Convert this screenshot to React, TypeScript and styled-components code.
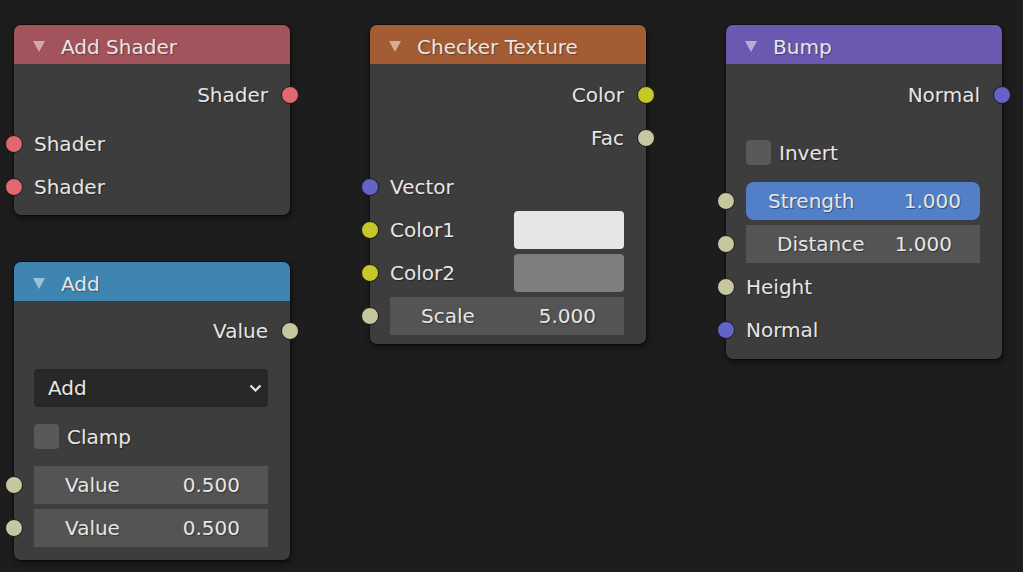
import React from "react";
import styled, { createGlobalStyle } from "styled-components";

const GlobalStyle = createGlobalStyle`
  html, body { margin: 0; padding: 0; background: #1d1d1d; }
  body { font-family: "DejaVu Sans", "Liberation Sans", sans-serif; }
`;

const SOCKET = {
  shader: "#e2676e",
  value: "#c6c79f",
  color: "#c7c72a",
  vector: "#6463c8",
};

type SocketKind = keyof typeof SOCKET;

const Canvas = styled.div`
  position: relative;
  width: 1023px;
  height: 572px;
  overflow: hidden;
  background: #1d1d1d;
  color: #e6e6e6;
  font-family: "DejaVu Sans", "Liberation Sans", sans-serif;
  font-size: 20px;
`;

const NodeBox = styled.div<{ $x: number; $y: number; $w: number }>`
  position: absolute;
  left: ${(p) => p.$x}px;
  top: ${(p) => p.$y}px;
  width: ${(p) => p.$w}px;
  background: #3d3d3d;
  border-radius: 7px;
  box-shadow: 0 0 0 1px rgba(0, 0, 0, 0.35), 1px 3px 7px rgba(0, 0, 0, 0.55);
  display: flex;
  flex-direction: column;
`;

const Header = styled.div<{ $color: string }>`
  height: 39px;
  box-sizing: border-box;
  padding: 4px 0 0 19px;
  background: ${(p) => p.$color};
  border-radius: 7px 7px 0 0;
  display: flex;
  align-items: center;
  gap: 16px;
  text-shadow: 1px 1px 1px rgba(0, 0, 0, 0.35);
`;

const Caret = styled.span`
  width: 0;
  height: 0;
  border-left: 6px solid transparent;
  border-right: 6px solid transparent;
  border-top: 11px solid rgba(255, 255, 255, 0.5);
`;

const Body = styled.div<{ $pt: number; $pb: number }>`
  display: flex;
  flex-direction: column;
  padding: ${(p) => p.$pt}px 22px ${(p) => p.$pb}px 20px;
`;

const Row = styled.div<{ $mt?: number; $align?: "start" | "end" }>`
  position: relative;
  height: 43px;
  margin-top: ${(p) => p.$mt ?? 0}px;
  display: flex;
  align-items: center;
  justify-content: ${(p) => (p.$align === "end" ? "flex-end" : "space-between")};
  text-shadow: 1px 1px 1px rgba(0, 0, 0, 0.4);
`;

const Socket = styled.span<{ $kind: SocketKind; $side: "in" | "out" }>`
  position: absolute;
  top: 50%;
  width: 16px;
  height: 16px;
  margin-top: -9px;
  border-radius: 50%;
  border: 1px solid #181818;
  background: ${(p) => SOCKET[p.$kind]};
  ${(p) => (p.$side === "in" ? "left: -29px;" : "right: -31px;")}
`;

const Swatch = styled.div<{ $color: string }>`
  width: 110px;
  height: 38px;
  border-radius: 4px;
  background: ${(p) => p.$color};
`;

const NumberField = styled.div<{ $active?: boolean }>`
  flex: 1;
  height: 38px;
  box-sizing: border-box;
  display: flex;
  align-items: center;
  justify-content: space-between;
  padding: ${(p) => (p.$active ? "0 19px 0 22px" : "0 28px 0 31px")};
  background: ${(p) => (p.$active ? "#5280c8" : "#545454")};
  border-radius: ${(p) => (p.$active ? "8px" : "0")};
`;

const Dropdown = styled.div`
  flex: 1;
  height: 38px;
  box-sizing: border-box;
  display: flex;
  align-items: center;
  justify-content: space-between;
  padding: 0 6px 0 14px;
  background: #282828;
  border-radius: 4px;
`;

const CheckLabel = styled.label`
  display: flex;
  align-items: center;
  gap: 8px;
`;

const CheckBox = styled.span`
  width: 25px;
  height: 25px;
  border-radius: 4px;
  background: #595959;
`;

const Chevron = () => (
  <svg width="13" height="9" viewBox="0 0 13 9">
    <polyline points="1.5,1.5 6.5,6.5 11.5,1.5" fill="none" stroke="#e6e6e6" strokeWidth="2.2" />
  </svg>
);

type NodeProps = {
  x: number;
  y: number;
  w: number;
  title: string;
  color: string;
  pt: number;
  pb: number;
  children: React.ReactNode;
};

const Node = ({ x, y, w, title, color, pt, pb, children }: NodeProps) => (
  <NodeBox $x={x} $y={y} $w={w}>
    <Header $color={color}>
      <Caret />
      <span>{title}</span>
    </Header>
    <Body $pt={pt} $pb={pb}>
      {children}
    </Body>
  </NodeBox>
);

const Output = ({ label, kind, mt }: { label: string; kind: SocketKind; mt?: number }) => (
  <Row $align="end" $mt={mt}>
    <span>{label}</span>
    <Socket $kind={kind} $side="out" />
  </Row>
);

const Input = ({
  kind,
  mt,
  children,
}: {
  kind?: SocketKind;
  mt?: number;
  children: React.ReactNode;
}) => (
  <Row $mt={mt}>
    {kind && <Socket $kind={kind} $side="in" />}
    {children}
  </Row>
);

const Num = ({ label, value, active }: { label: string; value: string; active?: boolean }) => (
  <NumberField $active={active}>
    <span>{label}</span>
    <span>{value}</span>
  </NumberField>
);

export default function App() {
  return (
    <>
      <GlobalStyle />
      <Canvas>
        <Node x={14} y={25} w={276} title="Add Shader" color="#a3535b" pt={9.5} pb={7}>
          <Output label="Shader" kind="shader" />
          <Input kind="shader" mt={5.5}>
            <span>Shader</span>
          </Input>
          <Input kind="shader">
            <span>Shader</span>
          </Input>
        </Node>

        <Node x={14} y={262} w={276} title="Add" color="#3f85b1" pt={8.5} pb={10.5}>
          <Output label="Value" kind="value" />
          <Input mt={14}>
            <Dropdown>
              <span>Add</span>
              <Chevron />
            </Dropdown>
          </Input>
          <Input mt={5.5}>
            <CheckLabel>
              <CheckBox />
              <span>Clamp</span>
            </CheckLabel>
          </Input>
          <Input kind="value" mt={5.5}>
            <Num label="Value" value="0.500" />
          </Input>
          <Input kind="value">
            <Num label="Value" value="0.500" />
          </Input>
        </Node>

        <Node x={370} y={25} w={276} title="Checker Texture" color="#a35c33" pt={9.5} pb={6.5}>
          <Output label="Color" kind="color" />
          <Output label="Fac" kind="value" />
          <Input kind="vector" mt={6}>
            <span>Vector</span>
          </Input>
          <Input kind="color">
            <span>Color1</span>
            <Swatch $color="#e6e6e6" />
          </Input>
          <Input kind="color">
            <span>Color2</span>
            <Swatch $color="#7e7e7e" />
          </Input>
          <Input kind="value">
            <Num label="Scale" value="5.000" />
          </Input>
        </Node>

        <Node x={726} y={25} w={276} title="Bump" color="#6b58b0" pt={9.5} pb={7.5}>
          <Output label="Normal" kind="vector" />
          <Input mt={14.5}>
            <CheckLabel>
              <CheckBox />
              <span>Invert</span>
            </CheckLabel>
          </Input>
          <Input kind="value" mt={5.5}>
            <Num label="Strength" value="1.000" active />
          </Input>
          <Input kind="value">
            <Num label="Distance" value="1.000" />
          </Input>
          <Input kind="value">
            <span>Height</span>
          </Input>
          <Input kind="vector">
            <span>Normal</span>
          </Input>
        </Node>
      </Canvas>
    </>
  );
}
